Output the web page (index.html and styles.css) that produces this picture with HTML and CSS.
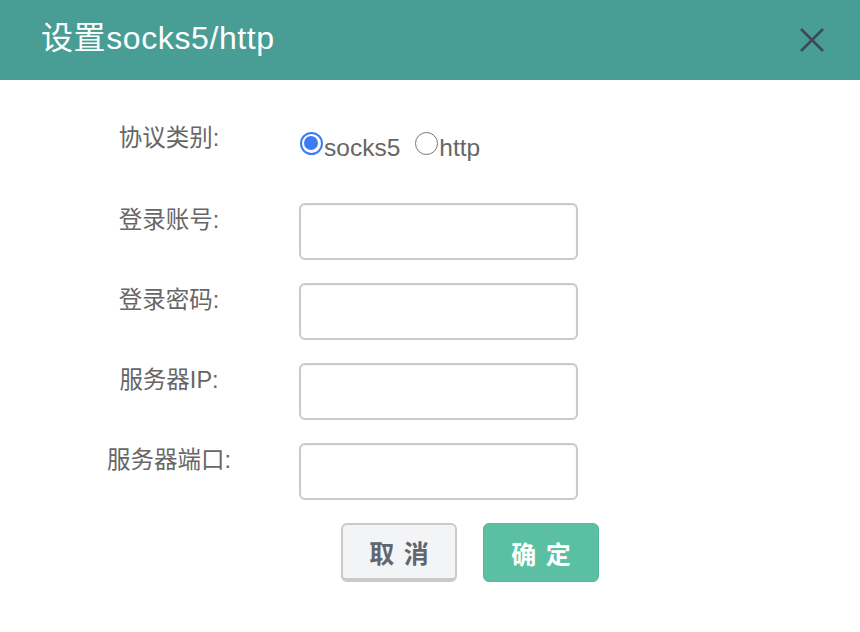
FILE: index.html
```html
<!DOCTYPE html>
<html lang="zh">
<head>
<meta charset="utf-8">
<link rel="stylesheet" href="styles.css">
</head>
<body>
<div class="dialog">
  <div class="header">
    <div class="title">设置socks5/http</div>
    <div class="close">
      <svg width="26" height="26" viewBox="0 0 26 26"><path d="M2 2 L24 24 M24 2 L2 24" stroke="#3c4a57" stroke-width="2.6" stroke-linecap="butt" fill="none"/></svg>
    </div>
  </div>
  <div class="body">
    <div class="row row-radio">
      <div class="label">协议类别:</div>
      <div class="field radios">
        <label class="radio"><span class="dot checked"></span>socks5</label>
        <label class="radio"><span class="dot"></span>http</label>
      </div>
    </div>
    <div class="row">
      <div class="label">登录账号:</div>
      <div class="field"><input class="input" type="text"></div>
    </div>
    <div class="row">
      <div class="label">登录密码:</div>
      <div class="field"><input class="input" type="text"></div>
    </div>
    <div class="row">
      <div class="label">服务器IP:</div>
      <div class="field"><input class="input" type="text"></div>
    </div>
    <div class="row">
      <div class="label">服务器端口:</div>
      <div class="field"><input class="input" type="text"></div>
    </div>
    <div class="actions">
      <button class="btn btn-cancel">取 消</button>
      <button class="btn btn-ok">确 定</button>
    </div>
  </div>
</div>
</body>
</html>
```
FILE: styles.css
```css
html, body {
  margin: 0;
  padding: 0;
  background: #ffffff;
}
body {
  width: 860px;
  height: 632px;
  overflow: hidden;
  font-family: "Liberation Sans", "Noto Sans CJK SC", sans-serif;
}
.header {
  height: 80px;
  background: #489d94;
  display: flex;
  align-items: center;
  justify-content: space-between;
  padding: 0 35px 0 41px;
}
.title {
  color: #ffffff;
  font-size: 32px;
  letter-spacing: 0.6px;
  line-height: 40px;
  margin-top: -4px;
}
.close {
  width: 26px;
  height: 26px;
  display: flex;
}
.row {
  display: flex;
  align-items: flex-start;
  height: 80px;
}
.row-radio {
  height: 123px;
}
.label {
  width: 338px;
  text-align: center;
  font-size: 23.5px;
  line-height: 30px;
  color: #666666;
  padding-top: 2px;
  box-sizing: border-box;
}
.row-radio .label {
  padding-top: 43px;
}
.radios {
  display: flex;
  gap: 15px;
  padding-top: 53px;
  margin-left: -38px;
}
.radio {
  display: flex;
  align-items: center;
  font-size: 24.5px;
  line-height: 30px;
  color: #666666;
}
.dot {
  width: 23px;
  height: 23px;
  border: 1.5px solid #767676;
  border-radius: 50%;
  margin-right: 1px;
  margin-top: -9px;
  box-sizing: border-box;
  position: relative;
}
.dot.checked {
  border: 2.5px solid #3b7cf4;
}
.dot.checked::after {
  content: "";
  position: absolute;
  left: 2px;
  top: 2px;
  width: 14px;
  height: 14px;
  border-radius: 50%;
  background: #3b7cf4;
}
.input {
  display: block;
  margin-left: -39px;
  width: 279px;
  height: 57px;
  box-sizing: border-box;
  border: 2px solid #cacaca;
  border-radius: 6px;
  background: #fff;
  box-shadow: inset 0 1px 2px rgba(0,0,0,0.06);
  outline: none;
}
.actions {
  display: flex;
  gap: 26px;
  padding-left: 341px;
}
.btn {
  width: 116px;
  height: 59px;
  border-radius: 6px;
  font-family: "Noto Sans CJK SC", sans-serif;
  font-size: 25px;
  font-weight: bold;
  letter-spacing: 2px;
  padding: 0 0 0 2px;
  cursor: pointer;
}
.btn-cancel {
  background: #f3f4f6;
  border: 2px solid #c9cacc;
  border-bottom-width: 4px;
  color: #5f6670;
}
.btn-ok {
  background: #5bbfa3;
  border: 1px solid #55b89c;
  color: #ffffff;
}
```
